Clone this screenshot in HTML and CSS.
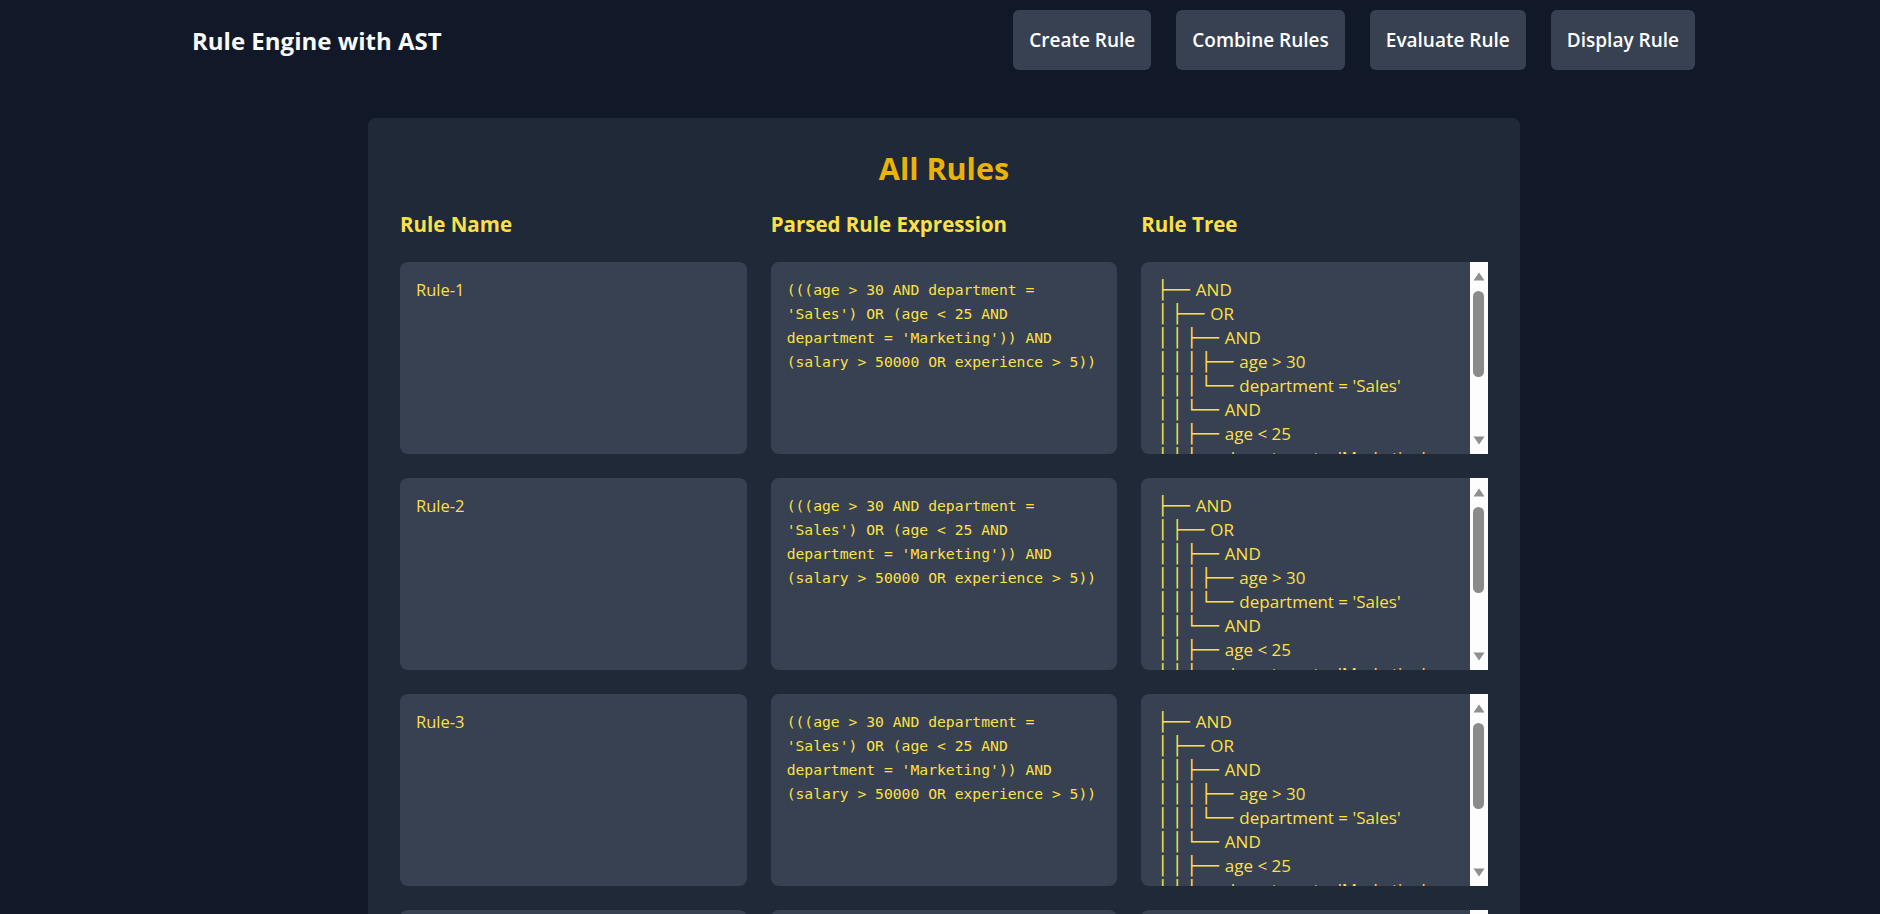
FILE: index.html
```html
<!DOCTYPE html>
<html lang="en">
<head>
<meta charset="utf-8">
<title>Rule Engine with AST</title>
<link rel="stylesheet" href="styles.css">
</head>
<body>
<header class="header">
  <div class="title">Rule Engine with AST</div>
  <nav class="nav">
    <button class="btn">Create Rule</button>
    <button class="btn">Combine Rules</button>
    <button class="btn">Evaluate Rule</button>
    <button class="btn">Display Rule</button>
  </nav>
</header>

<main class="main">
  <section class="panel">
    <h2 class="panel-title">All Rules</h2>
    <div class="grid">
      <div class="col-head">Rule Name</div>
      <div class="col-head">Parsed Rule Expression</div>
      <div class="col-head">Rule Tree</div>

      <!-- Rule 1 -->
      <div class="card"><div class="name">Rule-1</div></div>
      <div class="card"><div class="expr">(((age &gt; 30 AND department = 'Sales') OR (age &lt; 25 AND department = 'Marketing')) AND (salary &gt; 50000 OR experience &gt; 5))</div></div>
      <div class="card tree-card">
        <div class="tree-body">
          <div class="tl"><span class="br">├──</span>AND</div>
          <div class="tl"><span class="ind">│</span><span class="br">├──</span>OR</div>
          <div class="tl"><span class="ind">│</span><span class="ind">│</span><span class="br">├──</span>AND</div>
          <div class="tl"><span class="ind">│</span><span class="ind">│</span><span class="ind">│</span><span class="br">├──</span>age &gt; 30</div>
          <div class="tl"><span class="ind">│</span><span class="ind">│</span><span class="ind">│</span><span class="br">└──</span>department = 'Sales'</div>
          <div class="tl"><span class="ind">│</span><span class="ind">│</span><span class="br">└──</span>AND</div>
          <div class="tl"><span class="ind">│</span><span class="ind">│</span><span class="br">├──</span>age &lt; 25</div>
          <div class="tl"><span class="ind">│</span><span class="ind">│</span><span class="br">└──</span>department = 'Marketing'</div>
          <div class="tl"><span class="ind">│</span><span class="br">└──</span>OR</div>
          <div class="tl"><span class="ind"> </span><span class="br">├──</span>salary &gt; 50000</div>
          <div class="tl"><span class="ind"> </span><span class="br">└──</span>experience &gt; 5</div>
        </div>
        <div class="sb">
          <svg class="arr up" width="12" height="9" viewBox="0 0 12 9"><path d="M6 0.5 L11.5 8.5 H0.5 Z" fill="#8f8f8f"/></svg>
          <div class="thumb"></div>
          <svg class="arr down" width="12" height="9" viewBox="0 0 12 9"><path d="M0.5 0.5 H11.5 L6 8.5 Z" fill="#8f8f8f"/></svg>
        </div>
      </div>

      <!-- Rule 2 -->
      <div class="card"><div class="name">Rule-2</div></div>
      <div class="card"><div class="expr">(((age &gt; 30 AND department = 'Sales') OR (age &lt; 25 AND department = 'Marketing')) AND (salary &gt; 50000 OR experience &gt; 5))</div></div>
      <div class="card tree-card">
        <div class="tree-body">
          <div class="tl"><span class="br">├──</span>AND</div>
          <div class="tl"><span class="ind">│</span><span class="br">├──</span>OR</div>
          <div class="tl"><span class="ind">│</span><span class="ind">│</span><span class="br">├──</span>AND</div>
          <div class="tl"><span class="ind">│</span><span class="ind">│</span><span class="ind">│</span><span class="br">├──</span>age &gt; 30</div>
          <div class="tl"><span class="ind">│</span><span class="ind">│</span><span class="ind">│</span><span class="br">└──</span>department = 'Sales'</div>
          <div class="tl"><span class="ind">│</span><span class="ind">│</span><span class="br">└──</span>AND</div>
          <div class="tl"><span class="ind">│</span><span class="ind">│</span><span class="br">├──</span>age &lt; 25</div>
          <div class="tl"><span class="ind">│</span><span class="ind">│</span><span class="br">└──</span>department = 'Marketing'</div>
          <div class="tl"><span class="ind">│</span><span class="br">└──</span>OR</div>
          <div class="tl"><span class="ind"> </span><span class="br">├──</span>salary &gt; 50000</div>
          <div class="tl"><span class="ind"> </span><span class="br">└──</span>experience &gt; 5</div>
        </div>
        <div class="sb">
          <svg class="arr up" width="12" height="9" viewBox="0 0 12 9"><path d="M6 0.5 L11.5 8.5 H0.5 Z" fill="#8f8f8f"/></svg>
          <div class="thumb"></div>
          <svg class="arr down" width="12" height="9" viewBox="0 0 12 9"><path d="M0.5 0.5 H11.5 L6 8.5 Z" fill="#8f8f8f"/></svg>
        </div>
      </div>

      <!-- Rule 3 -->
      <div class="card"><div class="name">Rule-3</div></div>
      <div class="card"><div class="expr">(((age &gt; 30 AND department = 'Sales') OR (age &lt; 25 AND department = 'Marketing')) AND (salary &gt; 50000 OR experience &gt; 5))</div></div>
      <div class="card tree-card">
        <div class="tree-body">
          <div class="tl"><span class="br">├──</span>AND</div>
          <div class="tl"><span class="ind">│</span><span class="br">├──</span>OR</div>
          <div class="tl"><span class="ind">│</span><span class="ind">│</span><span class="br">├──</span>AND</div>
          <div class="tl"><span class="ind">│</span><span class="ind">│</span><span class="ind">│</span><span class="br">├──</span>age &gt; 30</div>
          <div class="tl"><span class="ind">│</span><span class="ind">│</span><span class="ind">│</span><span class="br">└──</span>department = 'Sales'</div>
          <div class="tl"><span class="ind">│</span><span class="ind">│</span><span class="br">└──</span>AND</div>
          <div class="tl"><span class="ind">│</span><span class="ind">│</span><span class="br">├──</span>age &lt; 25</div>
          <div class="tl"><span class="ind">│</span><span class="ind">│</span><span class="br">└──</span>department = 'Marketing'</div>
          <div class="tl"><span class="ind">│</span><span class="br">└──</span>OR</div>
          <div class="tl"><span class="ind"> </span><span class="br">├──</span>salary &gt; 50000</div>
          <div class="tl"><span class="ind"> </span><span class="br">└──</span>experience &gt; 5</div>
        </div>
        <div class="sb">
          <svg class="arr up" width="12" height="9" viewBox="0 0 12 9"><path d="M6 0.5 L11.5 8.5 H0.5 Z" fill="#8f8f8f"/></svg>
          <div class="thumb"></div>
          <svg class="arr down" width="12" height="9" viewBox="0 0 12 9"><path d="M0.5 0.5 H11.5 L6 8.5 Z" fill="#8f8f8f"/></svg>
        </div>
      </div>

      <!-- Rule 4 -->
      <div class="card"><div class="name">Rule-4</div></div>
      <div class="card"><div class="expr">(((age &gt; 30 AND department = 'Sales') OR (age &lt; 25 AND department = 'Marketing')) AND (salary &gt; 50000 OR experience &gt; 5))</div></div>
      <div class="card tree-card">
        <div class="tree-body">
          <div class="tl"><span class="br">├──</span>AND</div>
          <div class="tl"><span class="ind">│</span><span class="br">├──</span>OR</div>
          <div class="tl"><span class="ind">│</span><span class="ind">│</span><span class="br">├──</span>AND</div>
          <div class="tl"><span class="ind">│</span><span class="ind">│</span><span class="ind">│</span><span class="br">├──</span>age &gt; 30</div>
        </div>
        <div class="sb">
          <svg class="arr up" width="12" height="9" viewBox="0 0 12 9"><path d="M6 0.5 L11.5 8.5 H0.5 Z" fill="#8f8f8f"/></svg>
          <div class="thumb"></div>
          <svg class="arr down" width="12" height="9" viewBox="0 0 12 9"><path d="M0.5 0.5 H11.5 L6 8.5 Z" fill="#8f8f8f"/></svg>
        </div>
      </div>
    </div>
  </section>
</main>
</body>
</html>
```

FILE: styles.css
```css
html, body {
  margin: 0;
  padding: 0;
  background: #111827;
  overflow: hidden;
}

body {
  font-family: "Open Sans", "Noto Sans", sans-serif;
  color: #f9fafb;
}

.header {
  display: flex;
  align-items: center;
  justify-content: space-between;
  padding: 10px 185px 10px 192px;
}

.title {
  font-size: 24px;
  font-weight: 700;
  color: #f9fafb;
}

.nav {
  display: flex;
  gap: 25px;
}

.btn {
  height: 60px;
  padding: 0 16px;
  border: none;
  border-radius: 6px;
  background: #374151;
  color: #ffffff;
  font-family: "Open Sans", sans-serif;
  font-size: 19px;
  font-weight: 600;
  cursor: pointer;
}

.main {
  padding-top: 38px;
}

.panel {
  width: 1152px;
  margin-left: calc(50% - 572px);
  box-sizing: border-box;
  padding: 32px;
  background: #1f2937;
  border-radius: 8px;
}

.panel-title {
  margin: 0 0 24px;
  text-align: center;
  font-size: 30.5px;
  line-height: 36px;
  font-weight: 700;
  color: #eab308;
}

.grid {
  display: grid;
  grid-template-columns: repeat(3, 1fr);
  gap: 24px;
}

.col-head {
  font-size: 20.5px;
  line-height: 28px;
  font-weight: 700;
  color: #fde047;
}

.card {
  height: 192px;
  box-sizing: border-box;
  padding: 16px;
  background: #374151;
  border-radius: 8px;
  color: #fde047;
}

.name {
  font-size: 16.5px;
  line-height: 24px;
  font-weight: 500;
}

.expr {
  font-family: "DejaVu Sans Mono", monospace;
  font-size: 14.7px;
  line-height: 24px;
}

.tree-card {
  display: flex;
  padding: 0;
  border-radius: 8px 0 0 8px;
}

.tree-body {
  flex: 1;
  min-width: 0;
  overflow: hidden;
  padding: 16px 0 0 16px;
  font-size: 17px;
  font-weight: 500;
  line-height: 24px;
  white-space: nowrap;
}

.tl {
  height: 24px;
}

.ind {
  display: inline-block;
  width: 14.5px;
  font-family: "DejaVu Sans Mono", monospace;
  font-size: 18px;
  font-weight: 400;
  vertical-align: top;
}

.br {
  display: inline-block;
  font-family: "DejaVu Sans Mono", monospace;
  font-size: 18px;
  font-weight: 400;
  margin-right: 6px;
  vertical-align: top;
}

.sb {
  width: 18px;
  flex: none;
  background: #fdfdfd;
  display: flex;
  flex-direction: column;
  align-items: center;
}

.arr {
  display: block;
  flex: none;
}

.arr.up {
  margin-top: 10px;
}

.arr.down {
  margin-top: auto;
  margin-bottom: 9px;
}

.thumb {
  width: 11px;
  height: 86px;
  margin-top: 10px;
  border-radius: 6px;
  background: #8b8b8b;
}
```
